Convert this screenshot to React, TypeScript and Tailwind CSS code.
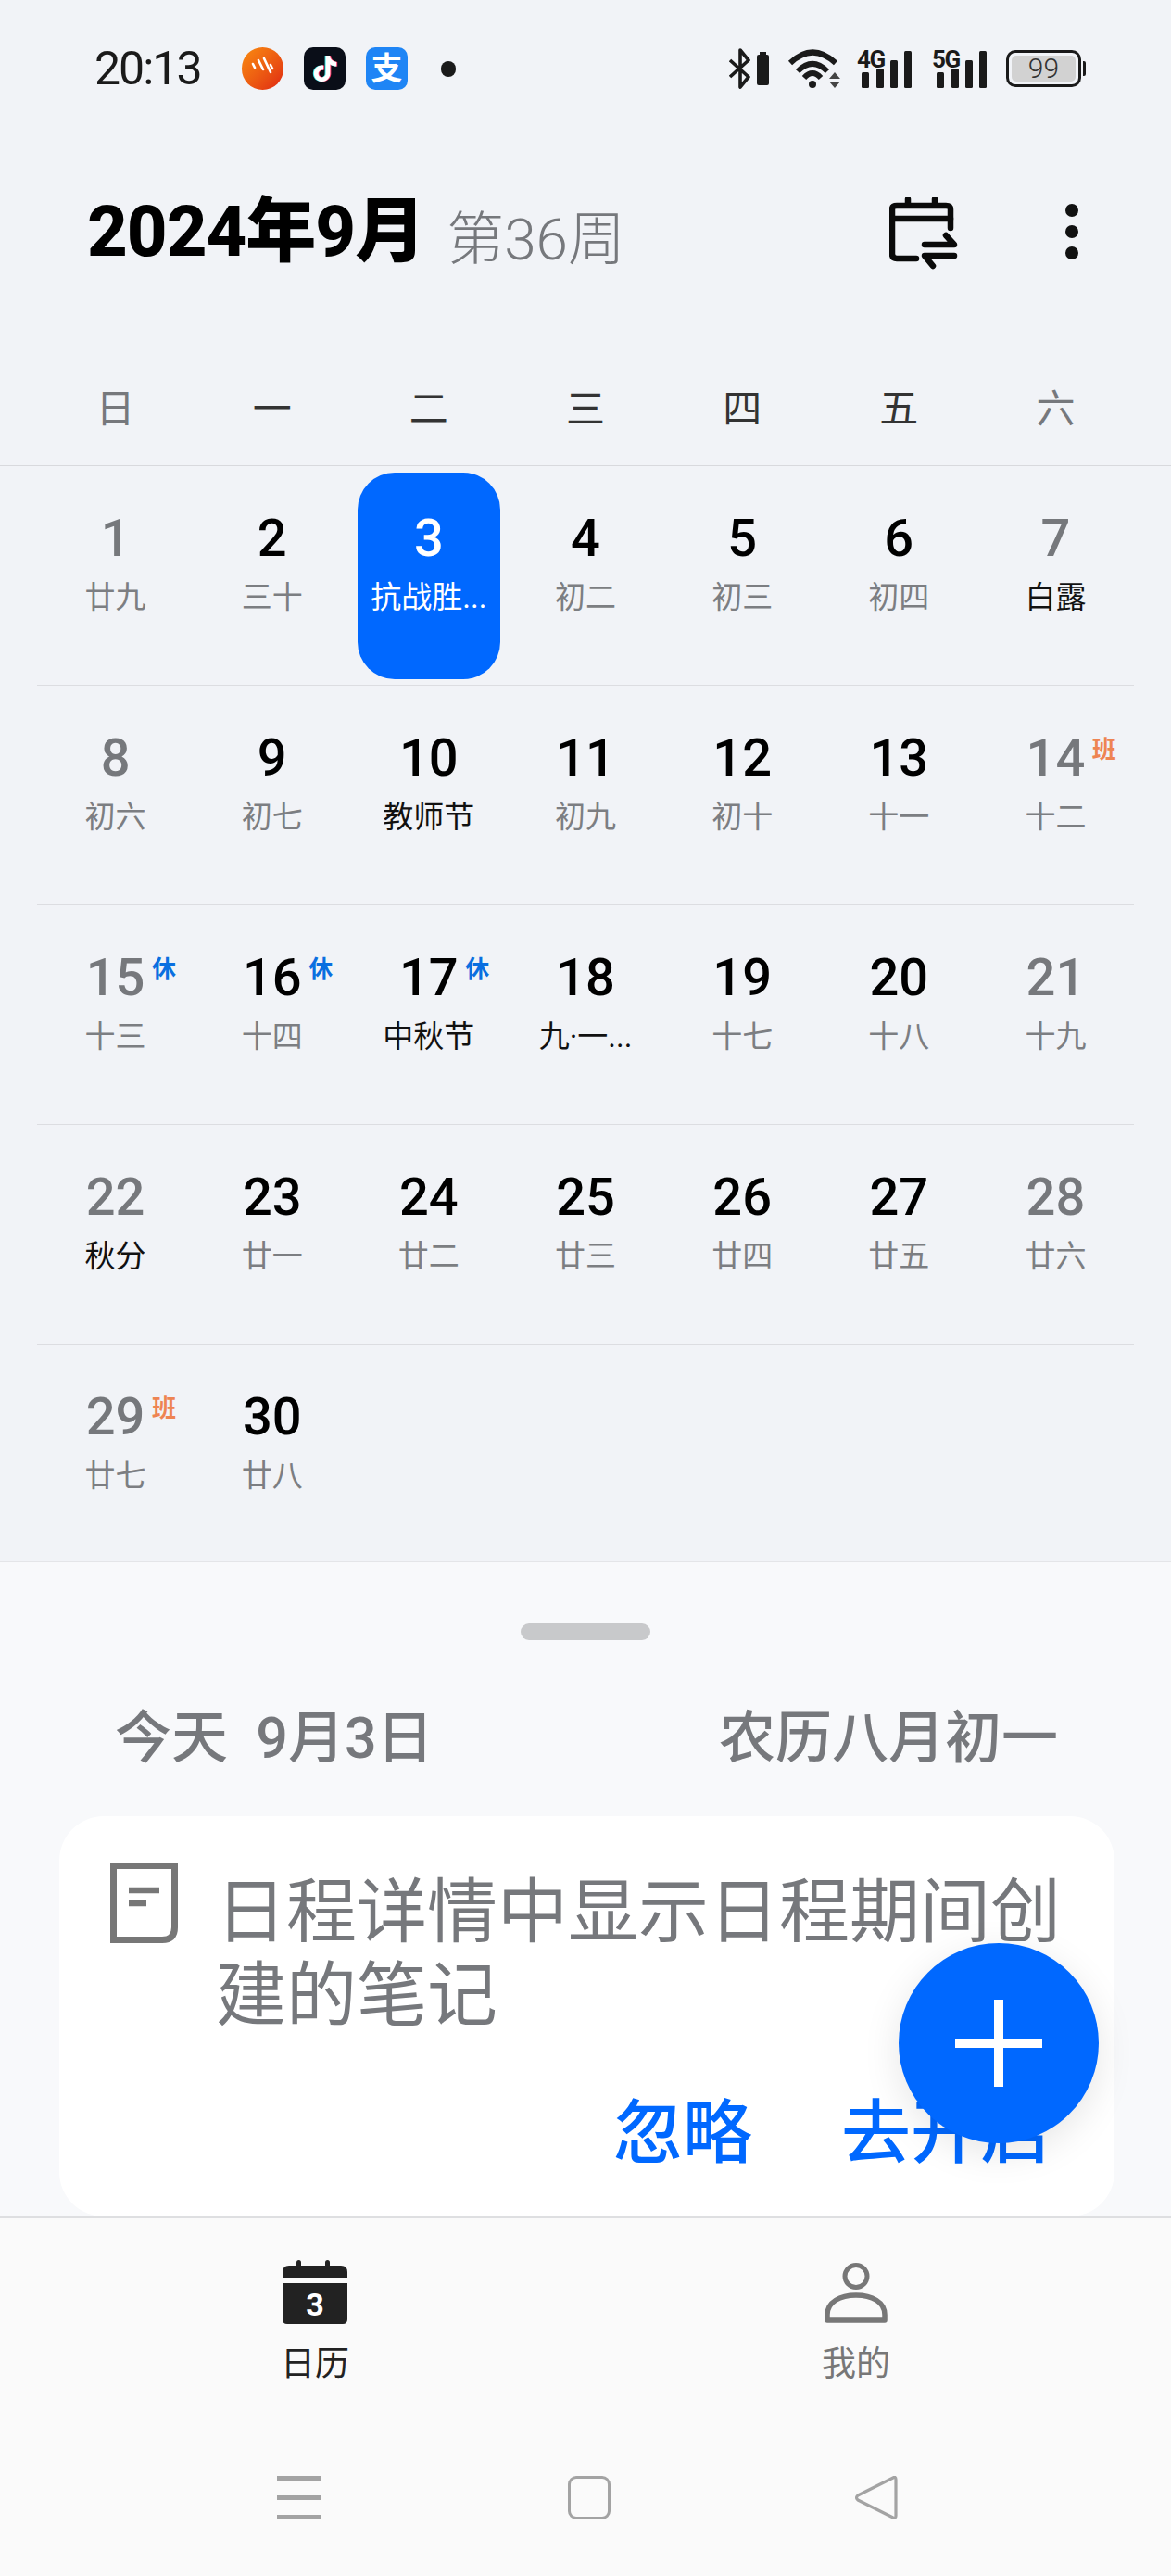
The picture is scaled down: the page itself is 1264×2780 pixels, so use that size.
import React from 'react';
import { SiTiktok } from 'react-icons/si';

const FONT = "font-['Roboto','Noto_Sans_CJK_SC',sans-serif]";

type Day = { d?: number; l?: string; hot?: boolean; badge?: string; sel?: boolean };

const rows: Day[][] = [
  [{ d: 1, l: '廿九' }, { d: 2, l: '三十' }, { d: 3, l: '抗战胜...', sel: true }, { d: 4, l: '初二' }, { d: 5, l: '初三' }, { d: 6, l: '初四' }, { d: 7, l: '白露', hot: true }],
  [{ d: 8, l: '初六' }, { d: 9, l: '初七' }, { d: 10, l: '教师节', hot: true }, { d: 11, l: '初九' }, { d: 12, l: '初十' }, { d: 13, l: '十一' }, { d: 14, l: '十二', badge: '班' }],
  [{ d: 15, l: '十三', badge: '休' }, { d: 16, l: '十四', badge: '休' }, { d: 17, l: '中秋节', hot: true, badge: '休' }, { d: 18, l: '九·一...', hot: true }, { d: 19, l: '十七' }, { d: 20, l: '十八' }, { d: 21, l: '十九' }],
  [{ d: 22, l: '秋分', hot: true }, { d: 23, l: '廿一' }, { d: 24, l: '廿二' }, { d: 25, l: '廿三' }, { d: 26, l: '廿四' }, { d: 27, l: '廿五' }, { d: 28, l: '廿六' }],
  [{ d: 29, l: '廿七', badge: '班' }, { d: 30, l: '廿八' }, {}, {}, {}, {}, {}],
];

function Bluetooth() {
  return (
    <svg width="44" height="44" viewBox="0 0 44 44" className="shrink-0">
      <path d="M1 13 L21 31 L12 42 V2 L21 13 L1 31" fill="none" stroke="#1a1a1a" strokeWidth="3.6" strokeLinejoin="round" />
      <rect x="30" y="7" width="13" height="33" rx="2" fill="#1a1a1a" />
      <rect x="33" y="4" width="7" height="4" fill="#1a1a1a" />
    </svg>
  );
}

function Wifi() {
  return (
    <svg width="60" height="44" viewBox="0 0 60 44" className="shrink-0">
      <g fill="none" stroke="#1a1a1a" strokeWidth="6" strokeLinecap="butt">
        <path d="M3 16 Q27 -7 52 16" />
        <path d="M11 25 Q27 9 43 25" />
        <path d="M18 32 Q27 22 36 32" />
      </g>
      <circle cx="27" cy="39" r="4" fill="#1a1a1a" />
      <path d="M45 33 L51 26 L57 33Z M45 36 L57 36 L51 43Z" fill="#444" />
    </svg>
  );
}

function Signal({ label }: { label: string }) {
  return (
    <div className="relative w-[60px] h-[44px] shrink-0">
      <div className="absolute left-0 top-0 text-[26px] leading-[24px] font-bold tracking-[-1.5px] text-[#1a1a1a]">{label}</div>
      <svg width="60" height="44" viewBox="0 0 60 44" className="absolute left-0 top-0">
        <rect x="5" y="26" width="8" height="17" rx="1.5" fill="#1a1a1a" />
        <rect x="21" y="22" width="8" height="21" rx="1.5" fill="#1a1a1a" />
        <rect x="36" y="13" width="8" height="30" rx="1.5" fill="#1a1a1a" />
        <rect x="51" y="3" width="8" height="40" rx="1.5" fill="#1a1a1a" />
      </svg>
    </div>
  );
}

function Battery() {
  return (
    <div className="flex items-center shrink-0">
      <div className="w-[81px] h-[40px] rounded-[10px] border-[3px] border-[#1a1a1a] p-[3px]">
        <div className="w-full h-full rounded-[5px] bg-[#d2d2d2] flex items-center justify-center text-[30px] leading-none font-light text-[#333]">99</div>
      </div>
      <div className="ml-[2px] w-[3px] h-[16px] rounded-r-[2px] bg-[#1a1a1a]" />
    </div>
  );
}

function SwitchCal() {
  return (
    <svg width="74" height="78" viewBox="0 0 74 78">
      <g fill="none" stroke="#0a0a0a" strokeWidth="6.5" strokeLinecap="round" strokeLinejoin="round">
        <path d="M29 66 H8 Q3 66 3 61 V13 Q3 9 8 9 H61 Q66 9 66 13 V33" />
        <path d="M3 23 H66" />
        <path d="M20 2 V8 M49 2 V8" />
        <path d="M38 51 H70 L61 41" />
        <path d="M70 63 H38 L47 74" />
      </g>
    </svg>
  );
}

function NoteIcon() {
  return (
    <svg width="73" height="87" viewBox="0 0 73 87" className="shrink-0">
      <path d="M3.5 3.5 H69.5 V70 Q69.5 83.5 56 83.5 H3.5 Z" fill="none" stroke="#777" strokeWidth="7" />
      <path d="M20 30 H53 M20 44 H39" fill="none" stroke="#777" strokeWidth="6.5" />
    </svg>
  );
}

function TabCal() {
  return (
    <svg width="70" height="70" viewBox="0 0 70 70">
      <path d="M0 19 V13 Q0 6 7 6 H63 Q70 6 70 13 V19 Z" fill="#222" />
      <rect x="15" y="0" width="5" height="10" rx="2.5" fill="#222" />
      <rect x="46" y="0" width="5" height="10" rx="2.5" fill="#222" />
      <path d="M0 25 H70 V64 Q70 69 65 69 H5 Q0 69 0 64 Z" fill="#222" />
      <text x="35" y="60" textAnchor="middle" fontFamily="Roboto, sans-serif" fontWeight="700" fontSize="34" fill="#fff">3</text>
    </svg>
  );
}

function TabUser() {
  return (
    <svg width="68" height="66" viewBox="0 0 68 66">
      <circle cx="34" cy="14.5" r="12" fill="none" stroke="#777" strokeWidth="5" />
      <path d="M3 62 V56 C3 42 17 35 34 35 C51 35 65 42 65 56 V62 Z" fill="none" stroke="#777" strokeWidth="5.5" strokeLinejoin="round" />
    </svg>
  );
}

function Cell({ c }: { c: Day; key?: React.Key }) {
  if (!c.d) return <div />;
  const col = c.d % 7;
  const weekend = col === 1 || col === 0;
  const numCol = c.sel ? 'text-white' : weekend ? 'text-[#76787c]' : 'text-black';
  const lunCol = c.sel ? 'text-white' : c.hot ? 'text-[#111]' : 'text-[#7c7e82]';
  return (
    <div className="relative flex flex-col items-center">
      {c.sel && <div className="absolute left-[8px] top-[7px] w-[154px] h-[223px] rounded-[40px] bg-[#0068ff]" />}
      <div className={`relative mt-[48px] h-[60px] text-[56px] leading-[60px] font-medium ${numCol}`}>{c.d}</div>
      <div className={`relative mt-[11px] h-[46px] text-[33px] leading-[46px] whitespace-nowrap ${lunCol}`}>{c.l}</div>
      {c.badge && (
        <div className={`absolute left-[124px] top-[55px] text-[26px] leading-[28px] font-bold ${c.badge === '班' ? 'text-[#ee8452]' : 'text-[#0a6fe0]'}`}>{c.badge}</div>
      )}
    </div>
  );
}

export default function App() {
  return (
    <div className={`w-[1264px] h-[2780px] overflow-hidden relative flex flex-col bg-[#f1f3f7] ${FONT}`}>
      {/* status bar */}
      <div className="h-[190px] pt-[51px] shrink-0">
        <div className="h-[46px] flex items-center pl-[102px] pr-[92px]">
          <div className="w-[112px] text-[50px] leading-[46px] tracking-[-2px] text-[#1a1a1a]">20:13</div>
          <div className="ml-[47px] w-[45px] h-[46px] rounded-full bg-gradient-to-br from-[#f98a10] to-[#df1f12] flex items-center justify-center">
            <svg width="28" height="24" viewBox="0 0 28 24"><path d="M3 7 L5 11 M9 3 L14 13 M15 1 L22 16 M22 8 L24 12" stroke="#fff" strokeWidth="2.6" strokeLinecap="round" fill="none" /></svg>
          </div>
          <div className="ml-[22px] w-[45px] h-[46px] rounded-[10px] bg-[#0a0e18] flex items-center justify-center">
            <div className="relative w-[28px] h-[30px]">
              <SiTiktok className="absolute left-[-1px] top-[1px] text-[#3ee6e6]" size={28} />
              <SiTiktok className="absolute left-[1px] top-[1px] text-[#ff3b6b]" size={28} />
              <SiTiktok className="absolute left-0 top-[1px] text-white" size={28} />
            </div>
          </div>
          <div className="ml-[22px] w-[45px] h-[46px] rounded-[10px] bg-[#1f85f5] flex items-center justify-center text-white text-[34px] leading-none font-bold">支</div>
          <div className="ml-[36px] w-[16px] h-[17px] rounded-full bg-[#1a1a1a]" />
          <div className="ml-auto flex items-center">
            <Bluetooth />
            <div className="ml-[19px]"><Wifi /></div>
            <div className="ml-[15px]"><Signal label="4G" /></div>
            <div className="ml-[21px]"><Signal label="5G" /></div>
            <div className="ml-[20px]"><Battery /></div>
          </div>
        </div>
      </div>

      {/* title row */}
      <div className="h-[120px] shrink-0 flex items-center pl-[94px] pr-[100px]">
        <div className="text-[76px] leading-[100px] font-extrabold text-black tracking-[-1px]">2024年9月</div>
        <div className="ml-[24px] mt-[18px] text-[62px] leading-[80px] font-light text-[#76787c]">第36周</div>
        <div className="ml-auto mr-[116px] mt-[4px]"><SwitchCal /></div>
        <div className="flex flex-col gap-[9px]">
          <div className="w-[14px] h-[14px] rounded-full bg-[#111]" />
          <div className="w-[14px] h-[14px] rounded-full bg-[#111]" />
          <div className="w-[14px] h-[14px] rounded-full bg-[#111]" />
        </div>
      </div>

      {/* weekdays */}
      <div className="h-[193px] shrink-0 pt-[92px] border-b border-[#d8d9dd]">
        <div className="mx-[40px] grid grid-cols-7 text-center text-[42px] leading-[80px] text-[#333]">
          {['日', '一', '二', '三', '四', '五', '六'].map((w, i) => (
            <div key={w} className={i === 0 || i === 6 ? 'text-[#76787c]' : ''}>{w}</div>
          ))}
        </div>
      </div>

      {/* calendar */}
      <div className="mx-[40px] shrink-0 flex flex-col">
        {rows.map((r, i) => (
          <div key={i} className={`grid grid-cols-7 ${i < 4 ? 'h-[237px] border-b border-[#dcdde1]' : 'h-[234px]'}`}>
            {r.map((c, j) => <Cell key={j} c={c} />)}
          </div>
        ))}
      </div>

      {/* sheet */}
      <div className="flex-1 bg-[#f8f9fb] border-t border-[#e4e5e8] flex flex-col">
        <div className="mt-[66px] mx-auto w-[140px] h-[18px] rounded-full bg-[#c8c9cb]" />
        <div className="mt-[66px] h-[80px] flex items-center justify-between pl-[124px] pr-[122px] text-[61px] leading-[80px] font-medium text-[#76787c]">
          <div className="whitespace-pre">今天  9月3日</div>
          <div>农历八月初一</div>
        </div>
        <div className="mt-[44px] ml-[64px] w-[1139px] h-[432px] rounded-[48px] bg-white flex flex-col">
          <div className="flex pl-[55px] pt-[50px]">
            <NoteIcon />
            <div className="ml-[41px] w-[930px] text-[76px] leading-[90px] text-[#76787c] mt-[9px]">日程详情中显示日程期间创建的笔记</div>
          </div>
          <div className="mt-[58px] flex justify-end pr-[70px] gap-[96px] text-[75px] leading-[90px] font-medium text-[#0068ff]">
            <div>忽略</div>
            <div>去开启</div>
          </div>
        </div>
      </div>

      {/* nav */}
      <div className="h-[388px] shrink-0 bg-[#fafafa] border-t-2 border-[#dedfe1] flex flex-col">
        <div className="mt-[45px] grid grid-cols-2 px-[48px]">
          <div className="flex flex-col items-center">
            <TabCal />
            <div className="mt-[18px] text-[37px] leading-[50px] text-[#222]">日历</div>
          </div>
          <div className="flex flex-col items-center">
            <div className="mt-[3px]"><TabUser /></div>
            <div className="mt-[19px] text-[37px] leading-[50px] text-[#777]">我的</div>
          </div>
        </div>
        <div className="mt-[95px] ml-[299px] flex items-center">
          <div className="w-[47px] flex flex-col gap-[16px]">
            <div className="h-[5px] bg-[#a3a3a3]" />
            <div className="h-[5px] bg-[#a3a3a3]" />
            <div className="h-[5px] bg-[#a3a3a3]" />
          </div>
          <div className="ml-[267px] w-[46px] h-[47px] rounded-[9px] border-[3px] border-[#a3a3a3]" />
          <svg className="ml-[264px]" width="47" height="47" viewBox="0 0 47 47">
            <path d="M44 4 Q44 0 41 2 L3 21 Q0 23.5 3 26 L41 45 Q44 46 44 43 Z" fill="none" stroke="#a3a3a3" strokeWidth="3.2" strokeLinejoin="round" />
          </svg>
        </div>
      </div>

      {/* FAB */}
      <div className="absolute left-[970px] top-[2097px] w-[216px] h-[216px] rounded-full bg-[#0068ff] shadow-[0_10px_40px_rgba(0,0,0,0.10)] flex items-center justify-center">
        <div className="relative w-[94px] h-[94px]">
          <div className="absolute left-[42px] top-0 w-[10px] h-[94px] bg-white" />
          <div className="absolute left-0 top-[42px] w-[94px] h-[10px] bg-white" />
        </div>
      </div>
    </div>
  );
}
